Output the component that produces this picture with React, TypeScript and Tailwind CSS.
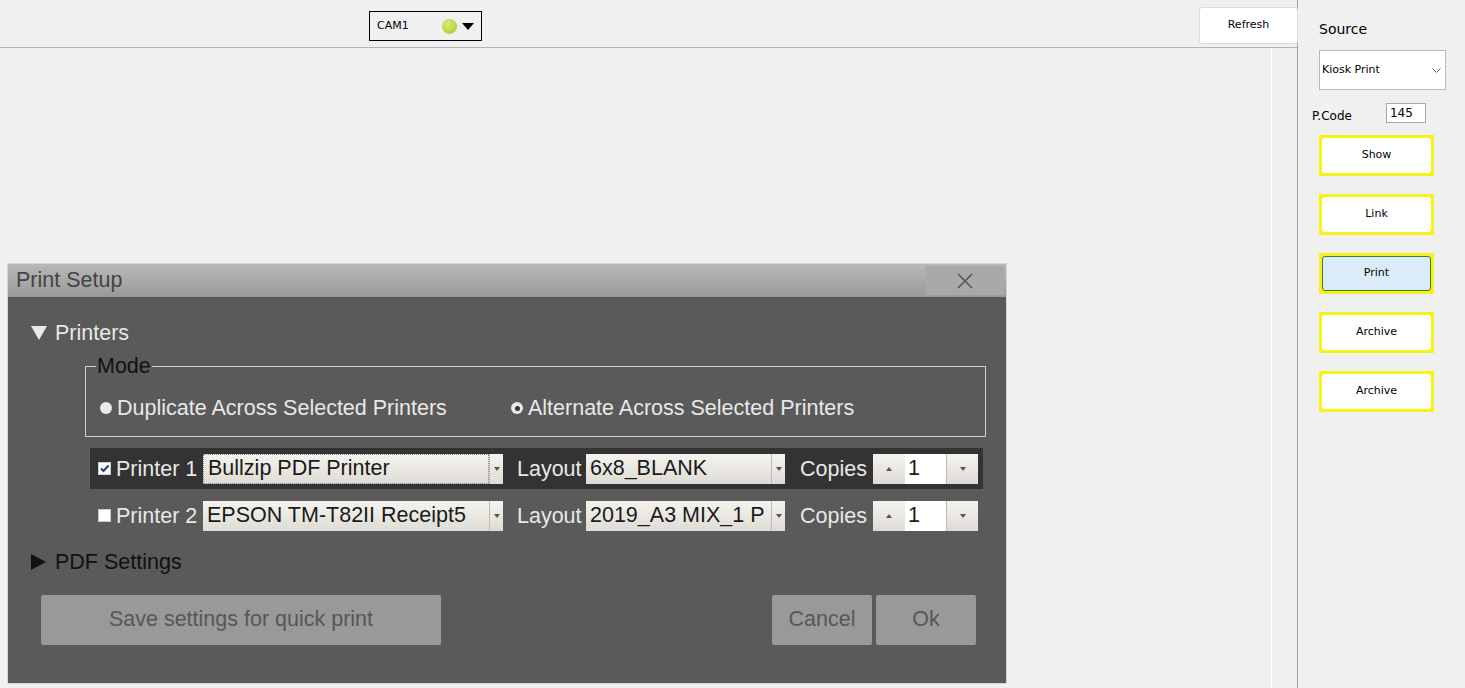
import React from 'react';

const font = { fontFamily: '"Liberation Sans", Arial, sans-serif' };

const SideButton = ({ label, active }: { label: string; active?: boolean }) => (
  <div className="w-[115px] h-[41px] bg-[#f5f31a] p-[3px]">
    <div
      className={
        active
          ? 'w-full h-full rounded-[3px] border border-[#3a7a3a] bg-[#dcebf8] flex items-center justify-center text-[11px] text-black'
          : 'w-full h-full rounded-[3px] bg-white flex items-center justify-center text-[11px] text-black'
      }
      style={{ fontFamily: 'Tahoma, "DejaVu Sans", sans-serif' }}
    >
      {label}
    </div>
  </div>
);

const Select = ({ value, width, focus }: { value: string; width: string; focus?: boolean }) => (
  <div className={`${width} h-[30px] flex bg-gradient-to-b from-[#f4f3ee] to-[#dedcd4] text-[#1a1a1a] text-[21.5px] leading-none`}>
    <div className={`flex-1 flex items-center pl-[4px] overflow-hidden whitespace-nowrap ${focus ? 'border border-dotted border-[#888]' : ''}`}>
      {value}
    </div>
    <div className="w-[14px] border-l border-[#bdbbb3] flex items-center justify-center">
      <svg width="6" height="4" viewBox="0 0 6 4"><path d="M0 0h6L3 4z" fill="#555" /></svg>
    </div>
  </div>
);

const Spinner = () => (
  <div className="w-[105px] h-[30px] flex text-[21.5px] leading-none">
    <div className="w-[32px] bg-gradient-to-b from-[#f4f3ee] to-[#dedcd4] flex items-center justify-center">
      <svg width="6" height="4" viewBox="0 0 6 4"><path d="M0 4h6L3 0z" fill="#555" /></svg>
    </div>
    <div className="w-[41px] bg-white flex items-center pl-[3px] text-[#1a1a1a]">1</div>
    <div className="w-[32px] bg-gradient-to-b from-[#f4f3ee] to-[#dedcd4] border-l border-[#bdbbb3] flex items-center justify-center">
      <svg width="6" height="4" viewBox="0 0 6 4"><path d="M0 0h6L3 4z" fill="#555" /></svg>
    </div>
  </div>
);

const PrinterRow = ({ n, checked, printer, layout }: { n: number; checked: boolean; printer: string; layout: string }) => (
  <div className={`w-[893px] h-[41px] flex items-center pl-[8px] ${checked ? 'bg-[#333333]' : ''}`}>
    <div className="w-[13px] h-[13px] bg-white border border-[#ccc] flex items-center justify-center">
      {checked && (
        <svg width="11" height="11" viewBox="0 0 11 11"><path d="M2 5.5l2.5 2.5L9.5 2.5" stroke="#1f3f8a" strokeWidth="2" fill="none" /></svg>
      )}
    </div>
    <span className="ml-[5px] w-[87px] text-[21.5px] text-[#e8e8e8] whitespace-nowrap">Printer {n}</span>
    <Select value={printer} width="w-[300px]" focus={checked} />
    <span className="ml-[14px] w-[69px] text-[21.5px] text-[#e8e8e8]">Layout</span>
    <Select value={layout} width="w-[199px]" />
    <span className="ml-[15px] w-[73px] text-[21.5px] text-[#e8e8e8]">Copies</span>
    <Spinner />
  </div>
);

export default function App() {
  return (
    <div className="relative w-[1465px] h-[688px] bg-[#f0f0f0] flex overflow-hidden" style={font}>
      {/* main area */}
      <div className="w-[1298px] h-full flex flex-col border-r border-[#a0a0a0]">
        <div className="h-[48px] border-b border-[#b4b4b4] flex items-start relative">
          <div className="ml-[369px] mt-[11px] w-[113px] h-[30px] border border-black flex items-center pl-[7px]" style={{ fontFamily: 'Tahoma, "DejaVu Sans", sans-serif' }}>
            <span className="text-[11px] text-black">CAM1</span>
            <div className="ml-[33px] w-[15px] h-[15px] rounded-full bg-[radial-gradient(circle_at_40%_35%,#d8ee70,#9ec52a)]" />
            <svg className="ml-[5px]" width="12" height="7" viewBox="0 0 12 7"><path d="M0 0h12L6 7z" fill="#000" /></svg>
          </div>
          <div className="ml-auto mr-[-1px] mt-[7px] w-[99px] h-[37px] bg-white border border-[#dcdcdc] rounded-[3px] flex items-center justify-center text-[11px] text-black" style={{ fontFamily: 'Tahoma, "DejaVu Sans", sans-serif' }}>
            Refresh
          </div>
        </div>
        <div className="flex-1 flex">
          <div className="w-[1272px] border-r border-white" />
        </div>
      </div>

      {/* right panel */}
      <div className="flex-1 flex flex-col pl-[21px] pt-[19px]" style={{ fontFamily: 'Tahoma, "DejaVu Sans", sans-serif' }}>
        <span className="text-[14px] text-black">Source</span>
        <div className="mt-[10px] w-[127px] h-[40px] bg-white border border-[#b8b8b8] flex items-center px-[2px] text-[11px] text-black">
          <span>Kiosk Print</span>
          <svg className="ml-auto mr-[2px]" width="9" height="5" viewBox="0 0 9 5"><path d="M0.5 0.5l4 4 4-4" stroke="#666" fill="none" /></svg>
        </div>
        <div className="mt-[13px] -ml-[7px] flex items-end">
          <span className="text-[12px] text-black mb-[-2px]" style={{ fontFamily: '"DejaVu Sans", sans-serif' }}>P.Code</span>
          <div className="ml-[34px] w-[40px] h-[20px] bg-white border border-[#a8a8a8] text-[12px] pl-[3px] leading-[18px]">145</div>
        </div>
        <div className="mt-[12px] flex flex-col gap-[18px]">
          <SideButton label="Show" />
          <SideButton label="Link" />
          <SideButton label="Print" active />
          <SideButton label="Archive" />
          <SideButton label="Archive" />
        </div>
      </div>

      {/* Print Setup dialog */}
      <div className="absolute left-[7px] top-[263px] w-[1000px] h-[421px] flex flex-col border border-[#d6d6d6] bg-[#5a5a5a]">
        <div className="h-[33px] flex items-center bg-gradient-to-b from-[#b8b8b8] to-[#9a9a9a]">
          <span className="ml-[8px] text-[21.5px] text-[#444]">Print Setup</span>
          <div className="ml-auto mr-[2px] w-[78px] h-[29px] bg-[#a9a9a9] flex items-center justify-center">
            <svg width="16" height="16" viewBox="0 0 16 16"><path d="M1 1l14 14M15 1L1 15" stroke="#555" strokeWidth="1.6" /></svg>
          </div>
        </div>
        <div className="flex-1 flex flex-col pl-[23px]">
          <div className="mt-[20px] flex items-center text-[21.5px] text-[#e8e8e8]">
            <svg width="16" height="14" viewBox="0 0 16 14"><path d="M0 0h16L8 14z" fill="#e8e8e8" /></svg>
            <span className="ml-[8px]">Printers</span>
          </div>
          <fieldset className="ml-[54px] mt-[6px] w-[901px] h-[82px] border border-[#d0d0d0] px-[14px]">
            <legend className="ml-[-4px] px-[1px] text-[21.5px] text-[#111] leading-[22px]">Mode</legend>
            <div className="flex items-center mt-[15px] text-[21.5px] text-[#e8e8e8]">
              <div className="w-[12px] h-[12px] rounded-full bg-[#e8e8e8]" />
              <span className="ml-[5px] w-[394px] whitespace-nowrap">Duplicate Across Selected Printers</span>
              <div className="w-[12px] h-[12px] rounded-full bg-[#e8e8e8] flex items-center justify-center">
                <div className="w-[5px] h-[5px] rounded-full bg-[#333]" />
              </div>
              <span className="ml-[5px] whitespace-nowrap">Alternate Across Selected Printers</span>
            </div>
          </fieldset>
          <div className="ml-[59px] mt-[11px] flex flex-col">
            <PrinterRow n={1} checked printer="Bullzip PDF Printer" layout="6x8_BLANK" />
            <div className="mt-[6px]">
              <PrinterRow n={2} checked={false} printer="EPSON TM-T82II Receipt5" layout="2019_A3 MIX_1 P" />
            </div>
          </div>
          <div className="mt-[10px] flex items-center text-[21.5px] text-[#111]">
            <svg width="15" height="16" viewBox="0 0 15 16"><path d="M0 0v16l15-8z" fill="#111" /></svg>
            <span className="ml-[9px]">PDF Settings</span>
          </div>
          <div className="mt-[16px] flex pr-[30px]">
            <div className="ml-[10px] w-[400px] h-[50px] rounded-[2px] bg-[#999999] flex items-center justify-center text-[21.5px] text-[#575757]">
              Save settings for quick print
            </div>
            <div className="ml-auto w-[100px] h-[50px] rounded-[2px] bg-[#999999] flex items-center justify-center text-[21.5px] text-[#575757]">
              Cancel
            </div>
            <div className="ml-[4px] w-[100px] h-[50px] rounded-[2px] bg-[#999999] flex items-center justify-center text-[21.5px] text-[#575757]">
              Ok
            </div>
          </div>
        </div>
      </div>
    </div>
  );
}
